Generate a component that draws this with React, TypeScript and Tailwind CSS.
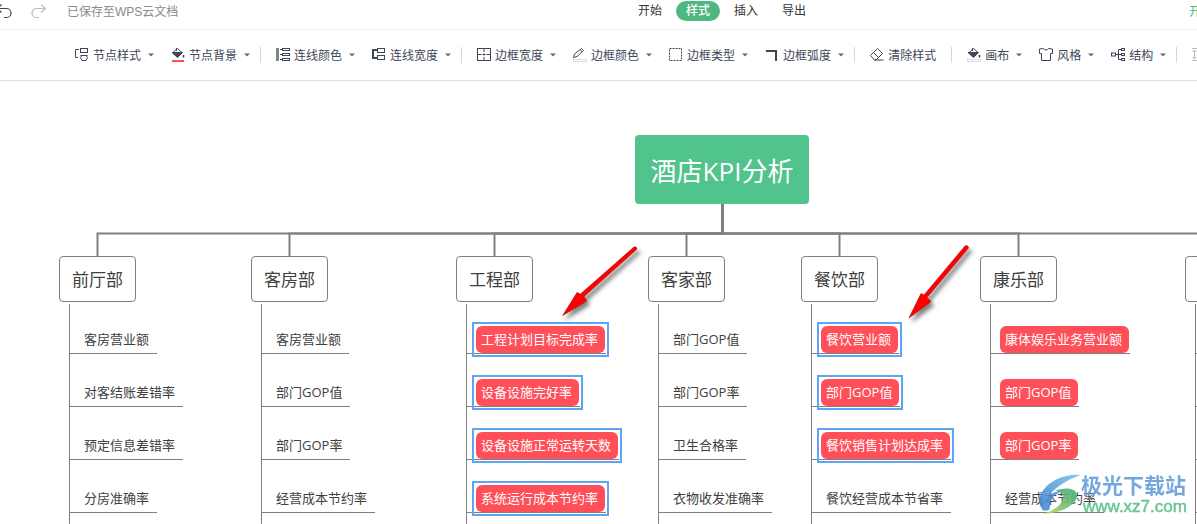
import type { ReactNode } from "react";

interface Tool {
  label: string;
  icon: ReactNode;
  menu?: boolean;
}

interface Leaf {
  text: string;
  filled?: boolean;
  selected?: boolean;
}

interface Department {
  name: string;
  x: number;
  leaves: Leaf[];
}

const CONNECTOR = "#808080";
const ROOT_X = 722.5;
const BOX_HALF = 38.5;

function ToolIcon({ children }: { children: ReactNode }) {
  return (
    <svg className="h-4 w-3.5 shrink-0" viewBox="0 0 14 16" fill="none" stroke="currentColor" strokeWidth="1" aria-hidden="true">
      {children}
    </svg>
  );
}

function Bucket({ bar }: { bar: "red" | "empty" }) {
  return (
    <ToolIcon>
      <path d="M2 5.5 6.5 1.5 11 5.5" />
      <path d="M5.5 4V1" />
      <path d="M1 5.5h10.5L6.5 10.5z" fill="currentColor" />
      <path d="M12.5 8v2.5" strokeWidth="1.6" />
      {bar === "red" ? (
        <rect x="1" y="13" width="12" height="2" fill="#ff4d55" stroke="none" />
      ) : (
        <rect x="0.5" y="12.5" width="13" height="2" stroke="#d9dbe0" />
      )}
    </ToolIcon>
  );
}

const toolGroups: Tool[][] = [
  [
    {
      label: "节点样式",
      menu: true,
      icon: (
        <ToolIcon>
          <path d="M4 2.5H0.5v8H3" />
          <rect x="5.5" y="1.500" width="7" height="4" />
          <path d="M5.500 8.500h7M7 8.500h4l1.500 2-1.500 3H7l-1.500-3z" />
        </ToolIcon>
      ),
    },
    { label: "节点背景", menu: true, icon: <Bucket bar="red" /> },
  ],
  [
    {
      label: "连线颜色",
      menu: true,
      icon: (
        <ToolIcon>
          <path d="M1.500 1v13" stroke="#808389" strokeWidth="3" />
          <path d="M4 2.500h3M4 7.500h3M4 12.500h3" />
          <rect x="6.500" y="1.500" width="7" height="2" />
          <rect x="6.500" y="6.500" width="7" height="2" />
          <rect x="6.500" y="11.500" width="7" height="2" />
        </ToolIcon>
      ),
    },
    {
      label: "连线宽度",
      menu: true,
      icon: (
        <ToolIcon>
          <path d="M5 3H1v8h4" strokeWidth="2" />
          <rect x="5.500" y="1.500" width="7" height="4" />
          <rect x="5.500" y="8.500" width="7" height="4" />
        </ToolIcon>
      ),
    },
  ],
  [
    {
      label: "边框宽度",
      menu: true,
      icon: (
        <ToolIcon>
          <rect x="0.5" y="1.5" width="13" height="12" />
          <path d="M7 2v3M7 6.500v2M7 10v3M1 7.500h3.500M5.500 7.500h3M9.500 7.500H13" />
        </ToolIcon>
      ),
    },
    {
      label: "边框颜色",
      menu: true,
      icon: (
        <ToolIcon>
          <path d="M0.500 10.500 1.500 7 8.500 1.500l2 2L4 9.500zM7.300 3l2 1.800" />
          <rect x="0.5" y="12.5" width="13" height="2" stroke="#d9dbe0" />
        </ToolIcon>
      ),
    },
    {
      label: "边框类型",
      menu: true,
      icon: (
        <ToolIcon>
          <rect x="0.500" y="1.500" width="12" height="12" strokeDasharray="2 1" />
        </ToolIcon>
      ),
    },
    {
      label: "边框弧度",
      menu: true,
      icon: (
        <ToolIcon>
          <path d="M1 4h10v10" strokeWidth="2" />
        </ToolIcon>
      ),
    },
  ],
  [
    {
      label: "清除样式",
      icon: (
        <ToolIcon>
          <path d="M0.500 8.500 7.500 1.500l5 5-6.500 6.500H4.500zM3.500 5.500l5 5M4.500 13h9" />
        </ToolIcon>
      ),
    },
  ],
  [
    { label: "画布", menu: true, icon: <Bucket bar="empty" /> },
    {
      label: "风格",
      menu: true,
      icon: (
        <ToolIcon>
          <path d="M4.500 1.500 0.500 2v4.500h2v7h9v-7h2V2l-4-0.500c-0.500 2-4.500 2-5 0z" />
        </ToolIcon>
      ),
    },
    {
      label: "结构",
      menu: true,
      icon: (
        <ToolIcon>
          <rect x="0.500" y="6" width="4" height="3" />
          <path d="M4.500 7.500h3M10 2.500H7.500v10H10M7.500 7.500H10" />
          <rect x="10.500" y="1.500" width="3" height="2" />
          <rect x="10.500" y="6.500" width="3" height="2" />
          <rect x="10.500" y="11.500" width="3" height="2" />
        </ToolIcon>
      ),
    },
  ],
];

const blankLeaves: Leaf[] = [{ text: "" }, { text: "" }, { text: "" }, { text: "" }];

const departments: Department[] = [
  {
    name: "前厅部",
    x: 59,
    leaves: [{ text: "客房营业额" }, { text: "对客结账差错率" }, { text: "预定信息差错率" }, { text: "分房准确率" }],
  },
  {
    name: "客房部",
    x: 251,
    leaves: [{ text: "客房营业额" }, { text: "部门GOP值" }, { text: "部门GOP率" }, { text: "经营成本节约率" }],
  },
  {
    name: "工程部",
    x: 456,
    leaves: [
      { text: "工程计划目标完成率", filled: true, selected: true },
      { text: "设备设施完好率", filled: true, selected: true },
      { text: "设备设施正常运转天数", filled: true, selected: true },
      { text: "系统运行成本节约率", filled: true, selected: true },
    ],
  },
  {
    name: "客家部",
    x: 648,
    leaves: [{ text: "部门GOP值" }, { text: "部门GOP率" }, { text: "卫生合格率" }, { text: "衣物收发准确率" }],
  },
  {
    name: "餐饮部",
    x: 801,
    leaves: [
      { text: "餐饮营业额", filled: true, selected: true },
      { text: "部门GOP值", filled: true, selected: true },
      { text: "餐饮销售计划达成率", filled: true, selected: true },
      { text: "餐饮经营成本节省率" },
    ],
  },
  {
    name: "康乐部",
    x: 980,
    leaves: [
      { text: "康体娱乐业务营业额", filled: true },
      { text: "部门GOP值", filled: true },
      { text: "部门GOP率", filled: true },
      { text: "经营成本节约率" },
    ],
  },
  { name: "", x: 1185, leaves: blankLeaves },
];

function Header() {
  return (
    <header className="flex h-[30px] items-start overflow-hidden border-b border-[#f0f0f0]">
      <div className="flex h-6 w-[628px] shrink-0 items-center text-[#8a8a8a]">
        <button type="button" aria-label="撤销" className="-ml-1 text-[#444]">
          <svg className="h-4 w-4" viewBox="0 0 16 16" fill="none" stroke="currentColor" strokeWidth="1.2">
            <path d="M5.500 0.500 1 4.500 5.500 8.500M1 4.500h9.500a4.500 4.500 0 0 1 0 9H8" />
          </svg>
        </button>
        <button type="button" aria-label="重做" className="ml-[19px] text-[#bdbdbd]">
          <svg className="h-4 w-4" viewBox="0 0 16 16" fill="none" stroke="currentColor" strokeWidth="1.2">
            <path d="M10 0.500 14.500 4.500 10 8.500M14.500 4.500H5.500a4.500 4.500 0 0 0 0 9h2.500" />
          </svg>
        </button>
        <span className="ml-5">已保存至WPS云文档</span>
      </div>
      <nav className="flex shrink-0 gap-1 pt-px text-[#333]">
        <button type="button" className="h-5 rounded-full px-2.5">开始</button>
        <button type="button" className="h-5 rounded-full bg-[#4fb881] px-2.5 font-medium text-white">样式</button>
        <button type="button" className="h-5 rounded-full px-2.5">插入</button>
        <button type="button" className="h-5 rounded-full px-2.5">导出</button>
      </nav>
      <button type="button" className="-mr-1 ml-auto h-6 shrink-0 whitespace-nowrap text-[#4fb881]">
        开
      </button>
    </header>
  );
}

function Toolbar() {
  return (
    <div className="flex h-[51px] items-center overflow-hidden border-b border-[#e2e2e2] pl-[75px] text-[#3d4757] shadow-[0_1px_2px_rgba(0,0,0,0.04)]">
      {toolGroups.map((group) => (
        <div key={group[0].label} className="flex shrink-0 items-center">
          <div className="flex items-center gap-4">
            {group.map((tool) => (
              <button key={tool.label} type="button" className="flex items-center gap-1 whitespace-nowrap">
                {tool.icon}
                <span className="pt-0.5">{tool.label}</span>
                {tool.menu ? (
                  <svg className="ml-0.5 h-1 w-2" viewBox="0 0 8 4" fill="#666e7b" aria-hidden="true">
                    <path d="M1 0.500h6L4 3.500z" />
                  </svg>
                ) : (
                  <span className="w-0.5" />
                )}
              </button>
            ))}
          </div>
          <span className="ml-[9px] mr-[15px] h-4 w-px bg-[#d4d7dc]" />
        </div>
      ))}
      <svg className="h-4 w-3.5 shrink-0 text-[#b8bcc4]" viewBox="0 0 14 16" fill="none" stroke="currentColor" aria-hidden="true">
        <path d="M0 1.500h5M0 13.500h5M2.500 3v9M0.500 5l2-2 2 2M0.500 10l2 2 2-2" />
      </svg>
    </div>
  );
}

function Branch({ department }: { department: Department }) {
  return (
    <section className="absolute bottom-0 top-[175px] flex flex-col items-start" style={{ left: department.x }}>
      <h2 className="flex h-[46px] min-w-[77px] shrink-0 items-center whitespace-nowrap rounded border border-[#808080] bg-white px-3 pt-0.5 text-[17px]">
        {department.name}
      </h2>
      <ul className="ml-2.5 mt-0.5 flex flex-1 flex-col items-start gap-[25px] border-l border-[#808080] pt-[22px] text-[13px]">
        {department.leaves.map((leaf, index) => (
          <li key={index} className={leaf.filled ? "border-b border-[#808080] pl-[9px] pr-px" : "border-b border-[#808080] pl-[9px]"}>
            <span
              className={`relative flex h-[27px] min-w-12 items-center whitespace-nowrap pl-[5px] pt-px ${
                leaf.filled ? "rounded-md bg-[#ff505a] pr-[7px] text-white" : "pr-2"
              }`}
            >
              {leaf.text}
              {leaf.selected && <span className="absolute -inset-1 border-2 border-[#5ea5f5]" />}
            </span>
          </li>
        ))}
      </ul>
    </section>
  );
}

function Watermark() {
  return (
    <div className="absolute left-[1037px] top-[390px] flex items-start opacity-90">
      <svg className="h-12 w-11" viewBox="0 0 44 48" aria-hidden="true">
        <defs>
          <linearGradient id="swirl-blue" x1="0" y1="1" x2="1" y2="0">
            <stop offset="0" stopColor="#3f7fd0" />
            <stop offset="1" stopColor="#7cc4ee" />
          </linearGradient>
          <linearGradient id="swirl-green" x1="0" y1="1" x2="1" y2="0">
            <stop offset="0" stopColor="#d8dc5a" />
            <stop offset="0.4" stopColor="#7cc36c" />
            <stop offset="1" stopColor="#46b07c" />
          </linearGradient>
        </defs>
        <path d="M44 4C26 2 8 12 3 25c-2 5-1 11 4 14C6 27 20 12 44 4z" fill="url(#swirl-blue)" />
        <path d="M18 20c9-4 20-3 22 3 1 9-12 19-35 20 11-3 19-8 21-15 1-5-2-8-8-8z" fill="url(#swirl-green)" />
        <path d="M31 19c-10 1-17 7-18 14 0 2 0 4-1 6-3 1-5 1-7 0 0-11 11-21 26-20z" fill="#4a8ed6" />
      </svg>
      <div className="flex flex-col whitespace-nowrap">
        <span className="text-[21px] font-bold leading-7 text-[#659fda]">极光下载站</span>
        <span className="pl-0.5 font-['Liberation_Sans',sans-serif] text-[17px] leading-4 text-[#5abf85] [-webkit-text-stroke:0.5px_#5abf85]">
          www.xz7.com
        </span>
      </div>
    </div>
  );
}

function Canvas() {
  return (
    <main className="relative min-h-[440px] flex-1 overflow-hidden font-['Open_Sans','Noto_Sans_CJK_SC',sans-serif] text-[#404040]">
      <svg className="absolute inset-0 h-full w-full" fill="none" stroke={CONNECTOR} strokeWidth="2" aria-hidden="true">
        {departments.map((d) => (
          <path key={d.x} d={`M${ROOT_X} 123V152.500H${d.x + BOX_HALF}V175`} />
        ))}
      </svg>
      <h1 className="absolute left-[635px] top-[54px] flex h-[69px] w-[174px] items-center justify-center whitespace-nowrap rounded bg-[#51c38c] pt-1 text-[26px] text-white">
        酒店KPI分析
      </h1>
      {departments.map((d) => (
        <Branch key={d.x} department={d} />
      ))}
      <svg className="pointer-events-none absolute inset-0 h-full w-full" aria-hidden="true">
        <g className="drop-shadow-[3px_4px_2px_rgba(0,0,0,0.5)]" fill="#f00" stroke="#b00000" strokeWidth="0.600">
          <path d="M634 166Q636.500 165 637 168L584 215.500 586.500 220 562.700 234.500 577 211.500 580.500 213z" />
          <path d="M965 165Q968 163.500 968.500 167L927 216.500 931 220.500 909 237 921 212.500 924 214z" />
        </g>
      </svg>
      <Watermark />
    </main>
  );
}

export default function App() {
  return (
    <div className="flex min-h-screen flex-col overflow-hidden bg-white font-['Liberation_Sans','Noto_Sans_CJK_SC',sans-serif] text-xs">
      <Header />
      <Toolbar />
      <Canvas />
    </div>
  );
}
